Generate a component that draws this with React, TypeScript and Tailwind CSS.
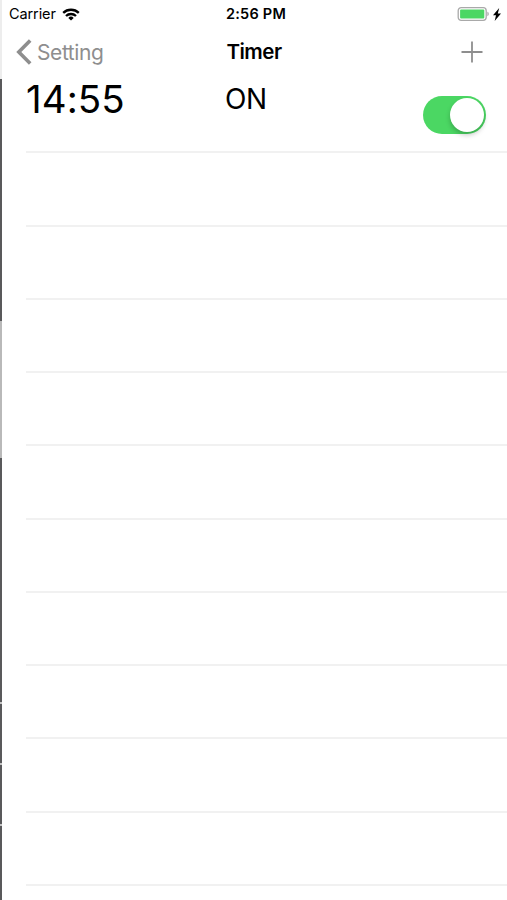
import { useState } from 'react';

interface TimerItem {
  id: number;
  time: string;
  enabled: boolean;
}

const TIMERS: TimerItem[] = [{ id: 1, time: '14:55', enabled: true }];
const EMPTY_ROWS = 10;

export default function App() {
  return (
    <div className="flex h-[900px] w-[507px] overflow-hidden bg-white font-['Inter','Liberation_Sans',sans-serif] text-black">
      <PreviousScreenEdge />
      <div className="flex min-w-0 flex-1 flex-col">
        <StatusBar />
        <NavBar />
        <main className="flex-1 pl-6">
          {TIMERS.map((timer) => (
            <TimerRow key={timer.id} timer={timer} />
          ))}
          {Array.from({ length: EMPTY_ROWS }, (_, i) => (
            <div key={i} className="h-[73.25px] border-b-2 border-[#f1f1f1]" />
          ))}
        </main>
      </div>
    </div>
  );
}

// Sliver of the screen underneath, visible along the left side
function PreviousScreenEdge() {
  return (
    <div className="flex w-0.5 shrink-0 flex-col bg-[#59595b]">
      <div className="h-[79px] bg-[#ededed]" />
      <div className="h-[242px]" />
      <div className="h-[137px] bg-[#b9b9b9]" />
      <div className="h-[244px]" />
      <div className="h-0.5 bg-[#c4c4c4]" />
      <div className="h-[59px]" />
      <div className="h-0.5 bg-[#c4c4c4]" />
      <div className="h-[59px]" />
      <div className="h-0.5 bg-[#c4c4c4]" />
    </div>
  );
}

function StatusBar() {
  return (
    <header className="grid h-7 shrink-0 grid-cols-3 items-center pr-1.5 pl-[7px] text-[14.5px] leading-none">
      <div className="flex items-center gap-1.5">
        <span className="tracking-[-0.1px]">Carrier</span>
        <WifiIcon />
      </div>
      <span className="pl-0.5 text-center font-semibold tracking-[0.25px] whitespace-nowrap">2:56 PM</span>
      <div className="flex items-center justify-end gap-1">
        <BatteryIcon />
        <BoltIcon />
      </div>
    </header>
  );
}

function NavBar() {
  return (
    <nav className="grid h-12 shrink-0 grid-cols-3 items-center pr-6 pl-3.5 text-[21px] leading-none">
      <button className="flex items-center gap-[5px] text-[#8e8e8e]">
        <svg width="16" height="26" viewBox="0 0 16 26" fill="none" stroke="currentColor" strokeWidth="3.6">
          <path d="M14.2 1.5 2.8 13l11.4 11.5" />
        </svg>
        <span className="tracking-[-0.4px]">Setting</span>
      </button>
      <h1 className="pl-[9px] text-center text-[20.5px] font-semibold tracking-[-0.5px]">Timer</h1>
      <button className="justify-self-end text-[#8e8e8e]" aria-label="Add timer">
        <svg width="22" height="22" viewBox="0 0 22 22" fill="none" stroke="currentColor" strokeWidth="1.8">
          <path d="M11 .5v21M.5 11h21" />
        </svg>
      </button>
    </nav>
  );
}

function TimerRow({ timer }: { timer: TimerItem }) {
  const [on, setOn] = useState(timer.enabled);

  return (
    <div className="flex h-[77.25px] items-start border-b-2 border-[#f1f1f1] pr-[21px]">
      <span className="w-[199px] text-[38.5px] leading-[46px] tracking-[0.05px]">{timer.time}</span>
      <span className="flex-1 text-[28px] leading-[46px] tracking-[-0.5px]">{on ? 'ON' : 'OFF'}</span>
      <button
        role="switch"
        aria-checked={on}
        aria-label="Toggle timer"
        onClick={() => setOn(!on)}
        className={`mt-5 flex h-[38px] w-[63px] items-center rounded-full p-0.5 ${
          on ? 'justify-end bg-[#4bd763]' : 'justify-start bg-[#e5e5e5]'
        }`}
      >
        <span className="size-[34px] rounded-full bg-white shadow-[0_3px_5px_rgba(0,0,0,0.22)]" />
      </button>
    </div>
  );
}

function WifiIcon() {
  return (
    <svg width="18" height="13" viewBox="0 0 18 13" fill="none" stroke="currentColor" strokeWidth="2.3">
      <path d="M1.2 4.9a11.2 11.2 0 0 1 15.6 0" />
      <path d="M4 8a7.2 7.2 0 0 1 10 0" />
      <path d="M9 12.6 6.3 9.9a3.9 3.9 0 0 1 5.4 0Z" fill="currentColor" stroke="none" />
    </svg>
  );
}

function BatteryIcon() {
  return (
    <svg width="32" height="14" viewBox="0 0 32 14">
      <rect x="1.2" y=".7" width="28" height="12.6" rx="3" fill="none" stroke="#a9a9a9" strokeWidth="1.3" />
      <rect x="3.1" y="2.6" width="24.2" height="8.8" rx="1" fill="#4bd763" />
      <path d="M30.4 4.8c1.8.6 1.8 3.8 0 4.4Z" fill="#a9a9a9" />
    </svg>
  );
}

function BoltIcon() {
  return (
    <svg width="8" height="13" viewBox="0 0 8 13" fill="currentColor">
      <path d="M6.2 0 0 7.3h3L1.7 13 8 5.4H4.8Z" />
    </svg>
  );
}
